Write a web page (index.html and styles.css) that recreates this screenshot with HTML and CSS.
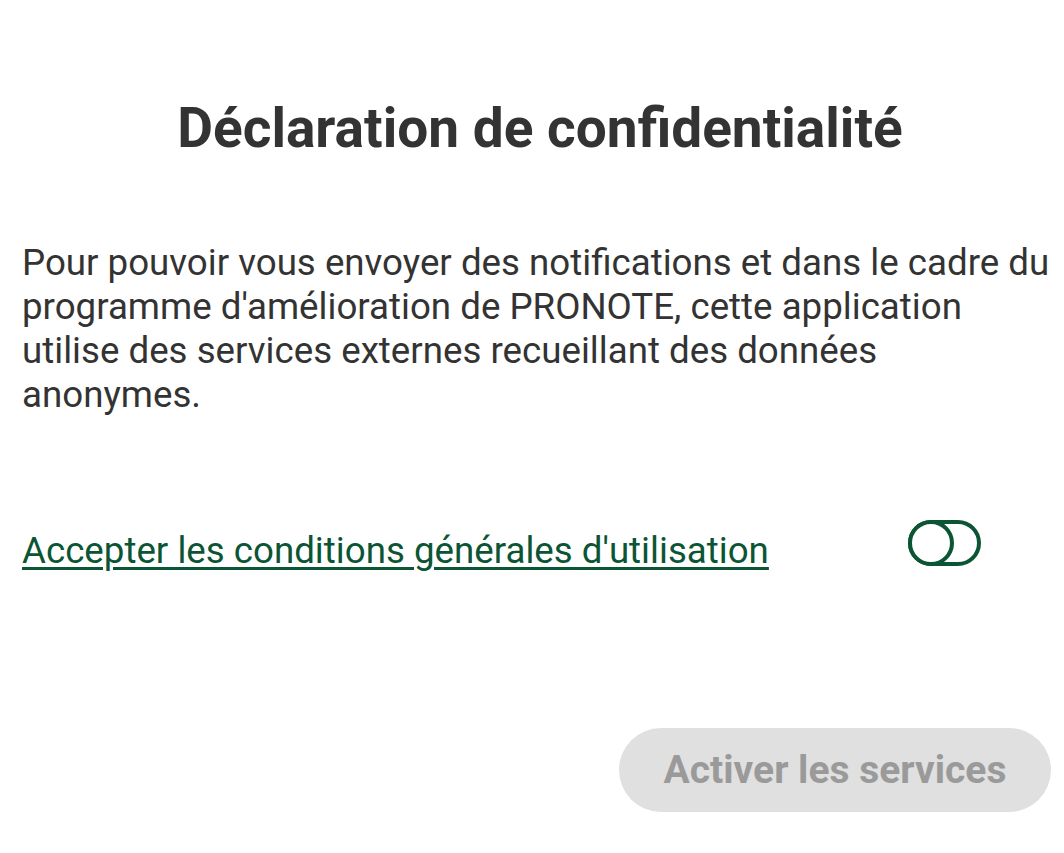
FILE: index.html
```html
<!DOCTYPE html>
<html lang="fr">
<head>
<meta charset="utf-8">
<link rel="stylesheet" href="styles.css">
</head>
<body>
<main class="page">
  <h1 class="title">Déclaration de confidentialité</h1>
  <p class="intro">Pour pouvoir vous envoyer des notifications et dans le cadre du programme d'amélioration de PRONOTE, cette application utilise des services externes recueillant des données anonymes.</p>
  <div class="accept-row">
    <a class="cgu-link" href="#">Accepter les conditions générales d'utilisation</a>
    <span class="toggle" role="switch" aria-checked="false"><span class="knob"></span></span>
  </div>
  <div class="actions">
    <button class="activate" disabled>Activer les services</button>
  </div>
</main>
</body>
</html>
```
FILE: styles.css
```css
html, body {
  margin: 0;
  padding: 0;
  background: #ffffff;
}
body {
  font-family: Roboto, "Liberation Sans", sans-serif;
  color: #333333;
}
.page {
  padding: 0 6px 0 22px;
  display: flex;
  flex-direction: column;
}
.title {
  margin: 96px 0 0 0;
  text-align: center;
  font-size: 55px;
  font-weight: 700;
  line-height: 64px;
  color: #333333;
}
.intro {
  margin: 81px 0 0 0;
  font-size: 36.7px;
  line-height: 44px;
  color: #333333;
}
.accept-row {
  margin-top: 112px;
  display: flex;
  align-items: center;
  justify-content: space-between;
  padding-right: 77px;
}
.cgu-link {
  font-size: 36.7px;
  line-height: 44px;
  color: #0b5535;
  text-decoration: underline;
  text-decoration-thickness: 3px;
  text-underline-offset: 4px;
}
.toggle {
  box-sizing: border-box;
  width: 73px;
  height: 46px;
  border: 4px solid #0b5535;
  border-radius: 23px;
  position: relative;
  margin-top: -16px;
}
.knob {
  position: absolute;
  left: -4px;
  top: -4px;
  box-sizing: border-box;
  width: 46px;
  height: 46px;
  border: 4px solid #0b5535;
  border-radius: 50%;
  background: #ffffff;
}
.actions {
  margin-top: 155px;
  display: flex;
  justify-content: flex-end;
  padding-right: 7px;
}
.activate {
  width: 432px;
  height: 84px;
  border: none;
  border-radius: 42px;
  background: #e0e0e0;
  color: #9a9a9a;
  font-family: Roboto, "Liberation Sans", sans-serif;
  font-size: 39px;
  font-weight: 700;
}
```
